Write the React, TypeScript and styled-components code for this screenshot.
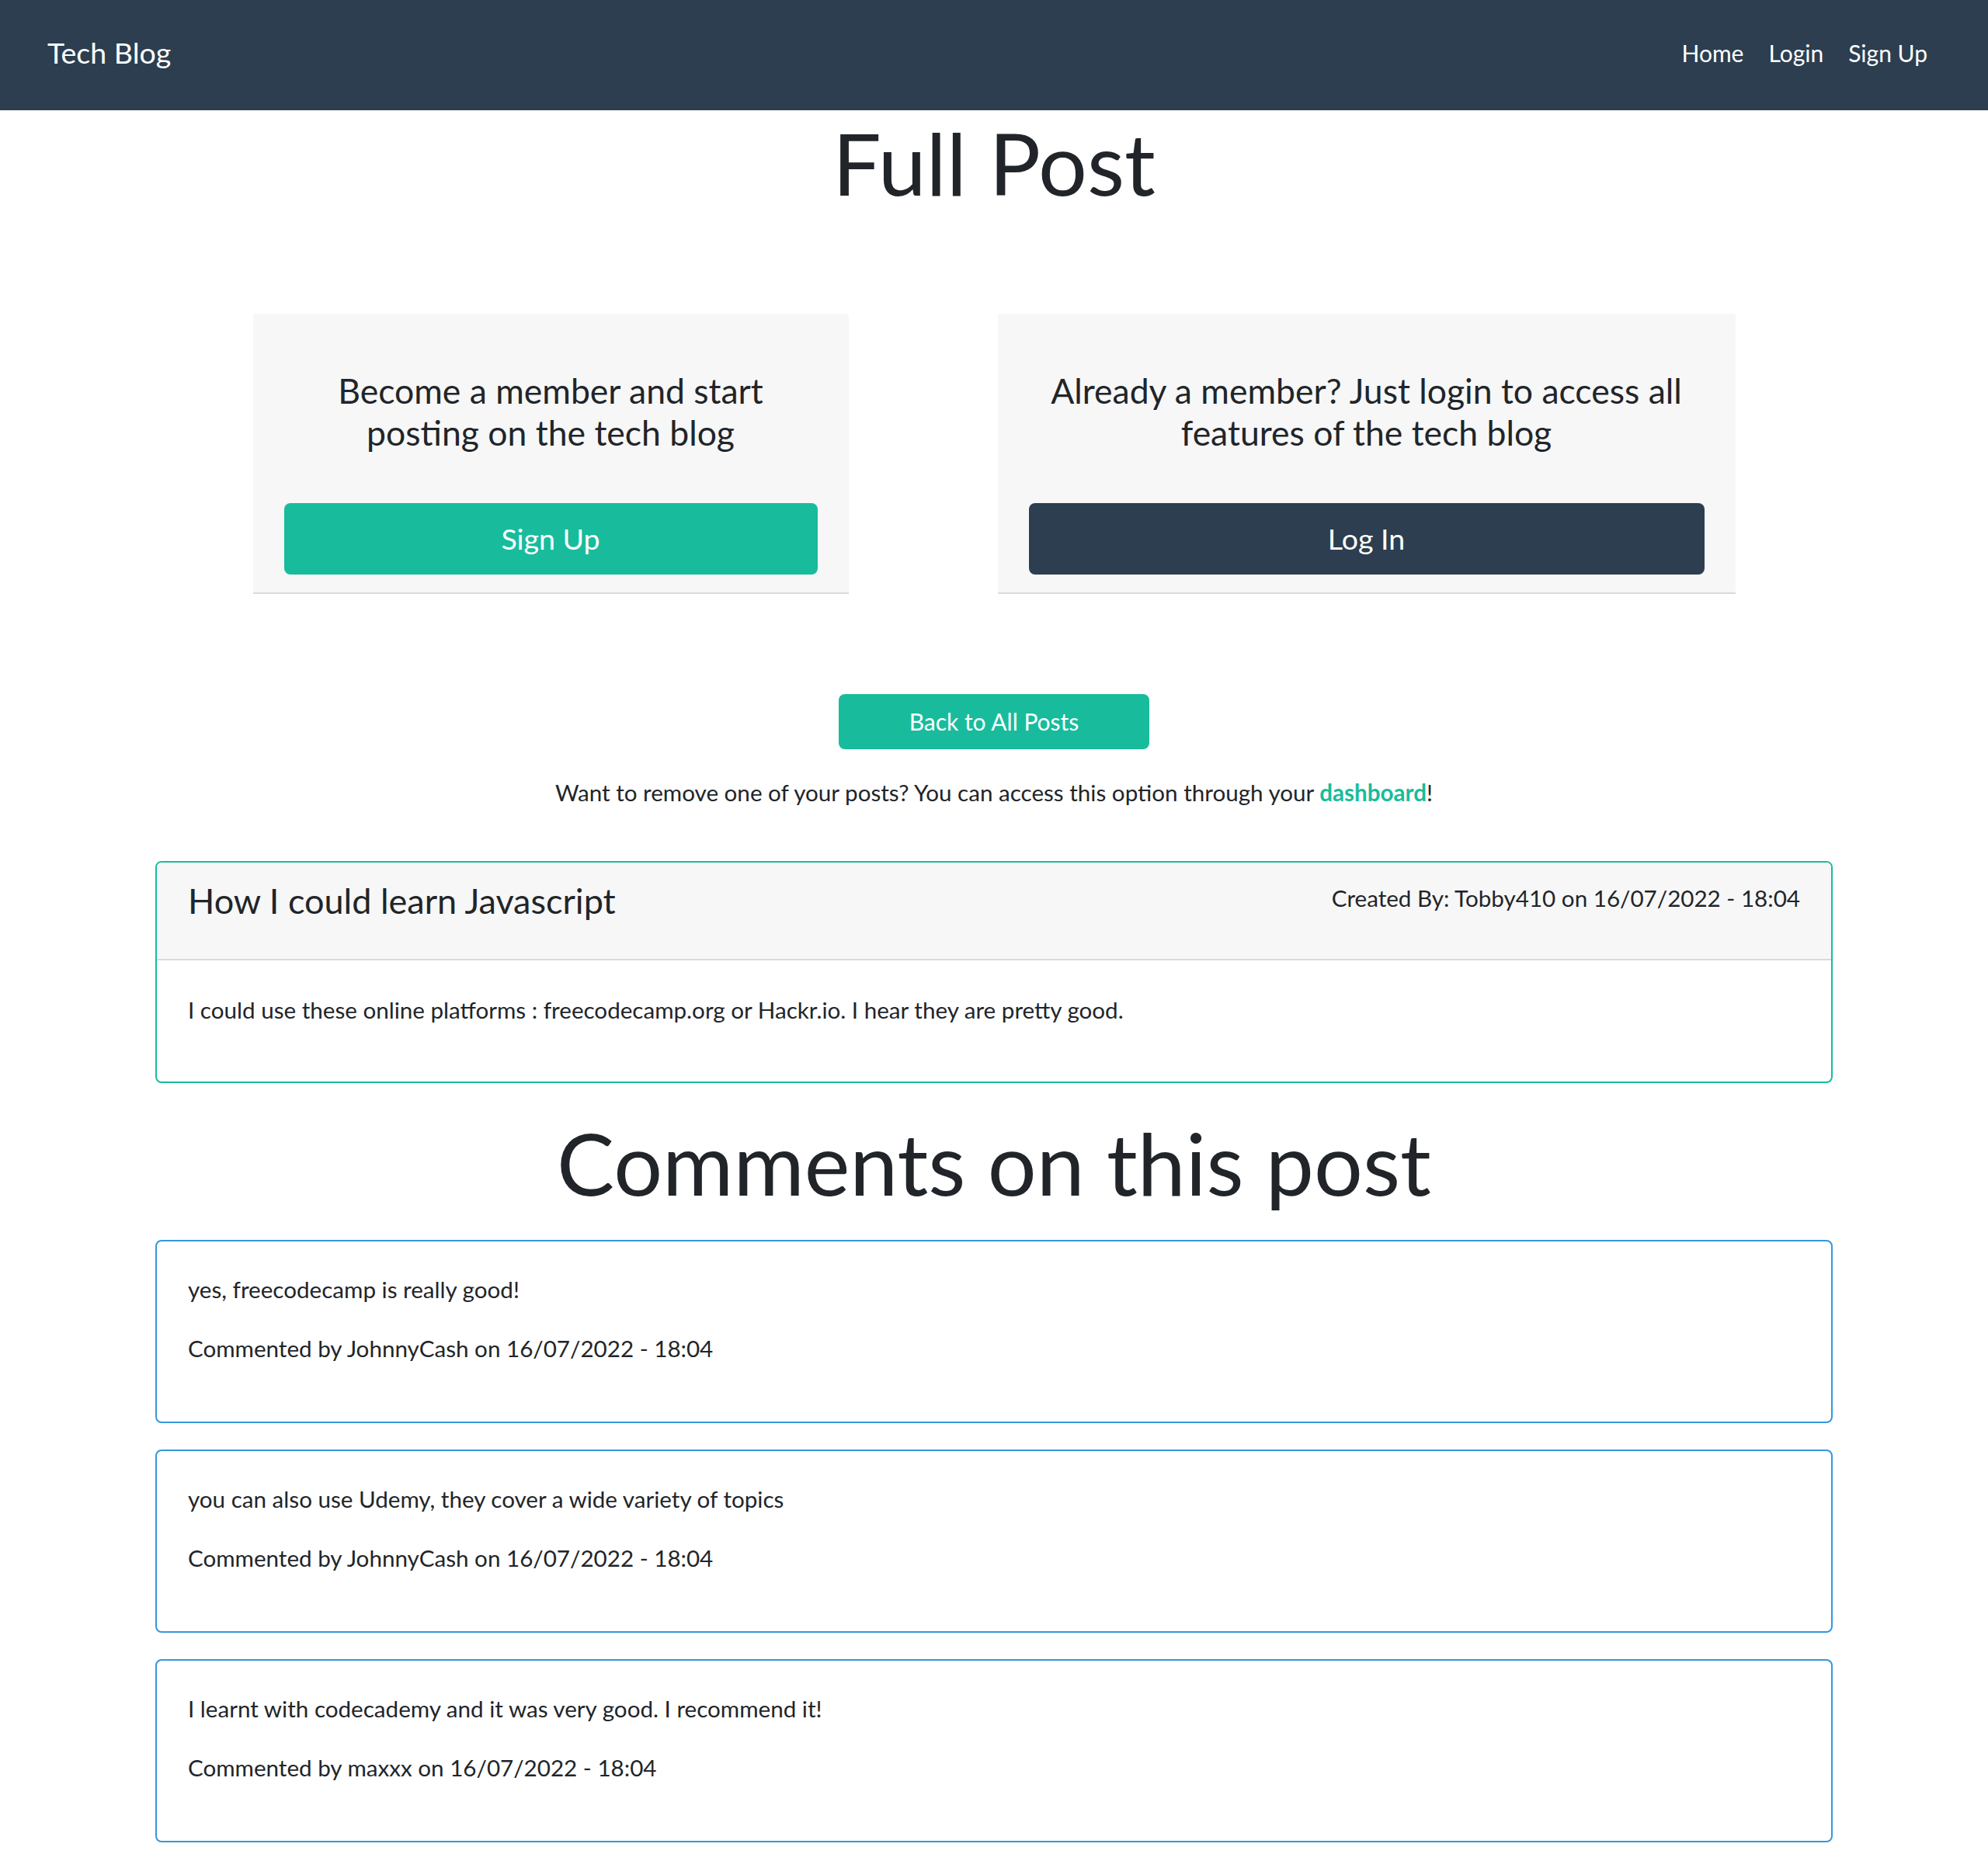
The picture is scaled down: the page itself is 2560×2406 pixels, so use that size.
import React from 'react';
import styled, {createGlobalStyle} from 'styled-components';

const GlobalStyle = createGlobalStyle`
    body {
        margin: 0;
        background: #fff;
        color: #212529;
        font-family: Lato, "Open Sans", sans-serif;
        font-size: 29.6px;
        line-height: 45px;
    }
`;

interface Comment {
    id: number;
    text: string;
    author: string;
    date: string;
}

const comments: Comment[] = [
    {id: 1, text: 'yes, freecodecamp is really good!', author: 'JohnnyCash', date: '16/07/2022 - 18:04'},
    {id: 2, text: 'you can also use Udemy, they cover a wide variety of topics', author: 'JohnnyCash', date: '16/07/2022 - 18:04'},
    {id: 3, text: 'I learnt with codecademy and it was very good. I recommend it!', author: 'maxxx', date: '16/07/2022 - 18:04'},
];

const Navbar = styled.nav`
    display: flex;
    align-items: center;
    justify-content: space-between;
    box-sizing: border-box;
    height: 142px;
    padding: 0 62px 6px 61px;
    background: #2c3e50;
`;

const Brand = styled.a`
    color: #fff;
    font-size: 37.5px;
    line-height: 1.5;
    text-decoration: none;
`;

const NavLinks = styled.div`
    display: flex;
    align-items: center;
`;

const NavLink = styled.a`
    padding: 0 16px;
    color: #fff;
    font-size: 30px;
    line-height: 1.5;
    text-decoration: none;
`;

const Main = styled.main`
    padding: 0 200px 33px;
`;

const PageTitle = styled.h1<{$top?: number; $bottom?: number}>`
    margin: ${props => props.$top ?? 0}px 0 ${props => props.$bottom ?? 0}px;
    font-size: 111px;
    font-weight: 400;
    line-height: 134px;
    text-align: center;
`;

const CtaRow = styled.div`
    display: flex;
    justify-content: center;
    gap: 192px;
    margin-top: 128px;
`;

const CtaCard = styled.div<{$width: number}>`
    box-sizing: border-box;
    width: ${props => props.$width}px;
    padding: 72px 40px 23px;
    background: #f7f7f7;
    border-bottom: 2px solid #dadada;
    border-radius: 4px 4px 0 0;
    text-align: center;
`;

const CtaTitle = styled.h4`
    margin: 0 0 64px;
    font-size: 44.5px;
    font-weight: 400;
    line-height: 54px;
`;

const CtaButton = styled.a<{$dark?: boolean}>`
    display: block;
    height: 92px;
    border-radius: 8px;
    background: ${props => props.$dark ? '#2c3e50' : '#18bc9c'};
    color: #fff;
    font-size: 37.5px;
    line-height: 92px;
    text-decoration: none;
`;

const BackRow = styled.div`
    display: flex;
    justify-content: center;
    margin-top: 129px;
`;

const BackButton = styled.a`
    width: 400px;
    height: 71px;
    border-radius: 8px;
    background: #18bc9c;
    color: #fff;
    font-size: 30px;
    line-height: 71px;
    text-align: center;
    text-decoration: none;
`;

const Notice = styled.p`
    margin: 33px 0 66px;
    text-align: center;
`;

const DashLink = styled.a`
    color: #18bc9c;
    font-weight: 700;
    text-decoration: none;
`;

const PostCard = styled.article`
    border: 2px solid #18bc9c;
    border-radius: 8px;
    overflow: hidden;
`;

const PostHeader = styled.header`
    display: flex;
    align-items: flex-start;
    justify-content: space-between;
    padding: 22px 40px 48px;
    background: #f7f7f7;
    border-bottom: 2px solid #dadada;
`;

const PostTitle = styled.h4`
    margin: 0;
    font-size: 45px;
    font-weight: 400;
    line-height: 54px;
`;

const PostMeta = styled.span`
    padding-top: 1px;
`;

const PostBody = styled.p`
    margin: 0;
    padding: 41px 40px 70px;
`;

const CommentList = styled.div`
    display: flex;
    flex-direction: column;
    gap: 34px;
`;

const CommentCard = styled.div`
    padding: 39px 40px 41px;
    border: 2px solid #3498db;
    border-radius: 8px;
`;

const CommentLine = styled.p`
    margin: 0 0 31px;
`;

export default function App() {
    return (
        <>
            <GlobalStyle />
            <Navbar>
                <Brand href='#'>Tech Blog</Brand>
                <NavLinks>
                    <NavLink href='#'>Home</NavLink>
                    <NavLink href='#'>Login</NavLink>
                    <NavLink href='#'>Sign Up</NavLink>
                </NavLinks>
            </Navbar>
            <Main>
                <PageTitle>Full Post</PageTitle>

                <CtaRow>
                    <CtaCard $width={767}>
                        <CtaTitle>Become a member and start<br />posting on the tech blog</CtaTitle>
                        <CtaButton href='#'>Sign Up</CtaButton>
                    </CtaCard>
                    <CtaCard $width={950}>
                        <CtaTitle>Already a member? Just login to access all<br />features of the tech blog</CtaTitle>
                        <CtaButton href='#' $dark>Log In</CtaButton>
                    </CtaCard>
                </CtaRow>

                <BackRow>
                    <BackButton href='#'>Back to All Posts</BackButton>
                </BackRow>
                <Notice>
                    Want to remove one of your posts? You can access this option through your <DashLink href='#'>dashboard</DashLink>!
                </Notice>

                <PostCard>
                    <PostHeader>
                        <PostTitle>How I could learn Javascript</PostTitle>
                        <PostMeta>Created By: Tobby410 on 16/07/2022 - 18:04</PostMeta>
                    </PostHeader>
                    <PostBody>
                        I could use these online platforms : freecodecamp.org or Hackr.io. I hear they are pretty good.
                    </PostBody>
                </PostCard>

                <PageTitle $top={35} $bottom={33}>Comments on this post</PageTitle>

                <CommentList>
                    {comments.map(c => (
                        <CommentCard key={c.id}>
                            <CommentLine>{c.text}</CommentLine>
                            <CommentLine>Commented by {c.author} on {c.date}</CommentLine>
                        </CommentCard>
                    ))}
                </CommentList>
            </Main>
        </>
    );
}
